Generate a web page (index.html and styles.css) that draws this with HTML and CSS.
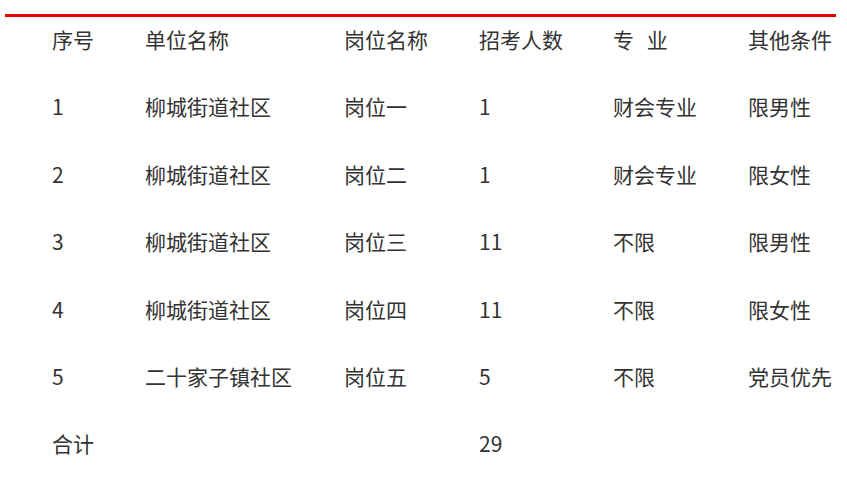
FILE: index.html
```html
<!DOCTYPE html>
<html lang="zh">
<head>
<meta charset="utf-8">
<link rel="stylesheet" href="styles.css">
</head>
<body>
<div class="wrap">
  <div class="rule"></div>
  <div class="table">
    <div class="row"><span>序号</span><span>单位名称</span><span>岗位名称</span><span>招考人数</span><span class="sp">专 业</span><span>其他条件</span></div>
    <div class="row"><span>1</span><span>柳城街道社区</span><span>岗位一</span><span>1</span><span>财会专业</span><span>限男性</span></div>
    <div class="row"><span>2</span><span>柳城街道社区</span><span>岗位二</span><span>1</span><span>财会专业</span><span>限女性</span></div>
    <div class="row"><span>3</span><span>柳城街道社区</span><span>岗位三</span><span>11</span><span>不限</span><span>限男性</span></div>
    <div class="row"><span>4</span><span>柳城街道社区</span><span>岗位四</span><span>11</span><span>不限</span><span>限女性</span></div>
    <div class="row"><span>5</span><span>二十家子镇社区</span><span>岗位五</span><span>5</span><span>不限</span><span>党员优先</span></div>
    <div class="row"><span>合计</span><span></span><span></span><span>29</span><span></span><span></span></div>
  </div>
</div>
</body>
</html>
```
FILE: styles.css
```css
html, body {
  margin: 0;
  padding: 0;
  background: #fff;
}
body {
  font-family: "Noto Sans CJK SC", "Noto Sans", sans-serif;
  color: #333;
  font-size: 21px;
}
.wrap {
  padding-top: 14px;
  margin-left: 5px;
  width: 831px;
}
.rule {
  height: 3px;
  background: #e60000;
}
.table {
  padding-top: 8px;
}
.row {
  display: grid;
  grid-template-columns: 93px 199px 135px 134px 135px auto;
  padding-left: 47px;
  height: 67.4px;
  line-height: 28px;
  white-space: nowrap;
}
.sp {
  word-spacing: 8px;
}
```
